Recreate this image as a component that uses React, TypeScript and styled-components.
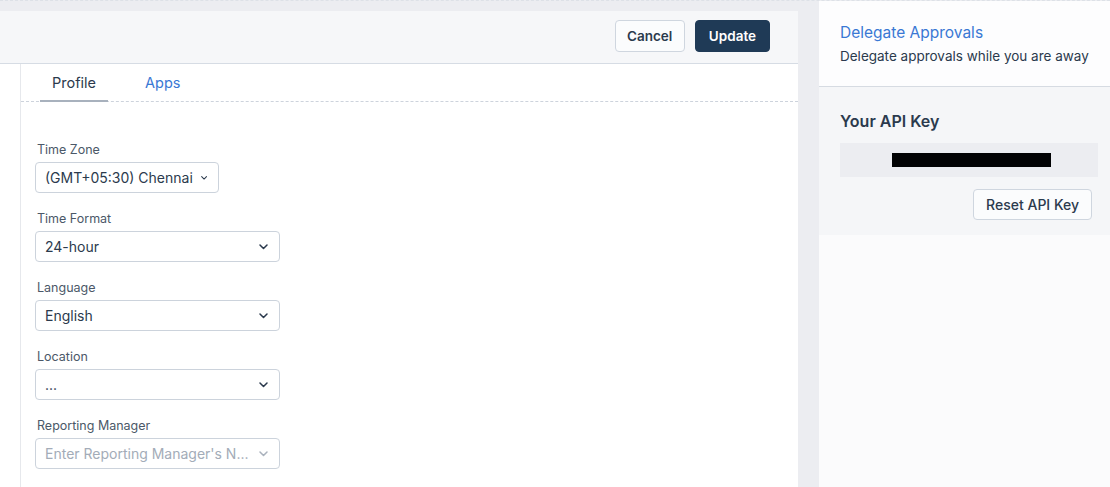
import React, { useState } from 'react'
import styled, { createGlobalStyle } from 'styled-components'

const color = {
  page: '#ecedf1',
  text: '#2b3a4d',
  label: '#4b5868',
  muted: '#8c97a6',
  blue: '#3a78d4',
  navy: '#1f3a56',
  border: '#ccd3dc',
}

const GlobalStyle = createGlobalStyle`
  html, body {
    margin: 0;
    padding: 0;
    background: ${color.page};
    font-family: Inter, "Noto Sans", "Liberation Sans", sans-serif;
    color: ${color.text};
    -webkit-font-smoothing: antialiased;
  }
`

const Page = styled.div`
  display: flex;
  height: 487px;
  overflow: hidden;
  border-top: 1px dashed #dde1e7;
  box-sizing: border-box;
`

const Main = styled.div`
  width: 798px;
  margin-top: 10px;
  background: #fff;
  display: flex;
  flex-direction: column;
`

const Header = styled.div`
  height: 53px;
  box-sizing: border-box;
  background: #f6f7f9;
  border-bottom: 1px solid #d6dce4;
  display: flex;
  justify-content: flex-end;
  align-items: center;
  gap: 10px;
  padding: 0 28px 2px 0;
`

const Button = styled.button<{ primary?: boolean }>`
  height: 32px;
  padding: 0 ${p => (p.primary ? 13 : 11.5)}px;
  border-radius: 4px;
  font-family: inherit;
  font-size: 13.5px;
  font-weight: 600;
  cursor: pointer;
  border: 1px solid ${p => (p.primary ? color.navy : '#cfd6df')};
  background: ${p => (p.primary ? color.navy : '#fbfcfd')};
  color: ${p => (p.primary ? '#fff' : color.text)};
`

const Body = styled.div`
  flex: 1;
  display: flex;
`

const Rail = styled.div`
  width: 20px;
  border-right: 1px solid #e6e8ec;
`

const Content = styled.div`
  flex: 1;
`

const Tabs = styled.div`
  display: flex;
  height: 37px;
  border-bottom: 1px dashed #cdd3dc;
  padding-left: 19px;
  gap: 25px;
`

const Tab = styled.div<{ active?: boolean }>`
  padding: 0 12px;
  min-width: 68px;
  display: flex;
  justify-content: ${p => (p.active ? 'center' : 'flex-start')};
  align-items: center;
  font-size: 14.5px;
  cursor: pointer;
  color: ${p => (p.active ? color.text : color.blue)};
  border-bottom: 2px solid ${p => (p.active ? '#a8b1bd' : 'transparent')};
  margin-bottom: -1px;
  box-sizing: border-box;
`

const Form = styled.div`
  padding: 39px 0 0 14px;
  display: flex;
  flex-direction: column;
  gap: 17px;
`

const Field = styled.div`
  display: flex;
  flex-direction: column;
  gap: 3px;
`

const Label = styled.label`
  font-size: 12.5px;
  color: ${color.label};
  padding-left: 2px;
  line-height: 18px;
`

const Select = styled.div<{ width?: number; placeholder?: boolean }>`
  width: ${p => p.width ?? 245}px;
  height: 31px;
  box-sizing: border-box;
  border: 1px solid ${color.border};
  border-radius: 4px;
  display: flex;
  align-items: center;
  justify-content: space-between;
  gap: 8px;
  padding: 0 11px 0 9px;
  font-size: 14px;
  color: ${p => (p.placeholder ? '#a3acb8' : color.text)};
  background: #fff;
  white-space: nowrap;
  overflow: hidden;
`

const Chevron = ({ faded }: { faded?: boolean }) => (
  <svg width="9" height="6" viewBox="0 0 9 6" fill="none">
    <path d="M1 1l3.5 3.5L8 1" stroke={faded ? '#aab2bd' : '#2b3a4d'} strokeWidth="1.5" strokeLinecap="round" strokeLinejoin="round" />
  </svg>
)

const Gutter = styled.div`
  width: 21px;
  background: ${color.page};
`

const Aside = styled.div`
  flex: 1;
  display: flex;
  flex-direction: column;
  background: #fbfbfc;
`

const Delegate = styled.div`
  height: 86px;
  box-sizing: border-box;
  background: #fdfdfe;
  border-bottom: 1px solid #d6dbe2;
  padding: 21px 0 0 21px;
`

const LinkTitle = styled.a`
  display: block;
  font-size: 15.5px;
  color: ${color.blue};
  text-decoration: none;
  line-height: 22px;
`

const Sub = styled.div`
  font-size: 13.5px;
  line-height: 22px;
  margin-top: 1px;
`

const ApiSection = styled.div`
  height: 148px;
  box-sizing: border-box;
  background: #f5f6f8;
  padding: 24px 12px 0 21px;
  display: flex;
  flex-direction: column;
`

const ApiTitle = styled.div`
  font-size: 16px;
  font-weight: 600;
  line-height: 20px;
`

const KeyBox = styled.div`
  margin-top: 12px;
  height: 34px;
  background: #ecedf1;
  display: flex;
  justify-content: center;
  align-items: center;
  padding-left: 4px;
`

const Masked = styled.div`
  width: 159px;
  height: 14px;
  background: #020304;
`

const ResetButton = styled(Button)`
  align-self: flex-end;
  margin: 12px 6px 0 0;
  font-weight: 500;
  font-size: 14px;
  height: 31px;
  padding: 0 12px;
`

export default function App() {
  const [tab, setTab] = useState('profile')
  const fields = [
    { label: 'Time Zone', value: '(GMT+05:30) Chennai', width: 184 },
    { label: 'Time Format', value: '24-hour' },
    { label: 'Language', value: 'English' },
    { label: 'Location', value: '...' },
    { label: 'Reporting Manager', value: "Enter Reporting Manager's N...", placeholder: true },
  ]
  return (
    <>
      <GlobalStyle />
      <Page>
        <Main>
          <Header>
            <Button>Cancel</Button>
            <Button primary>Update</Button>
          </Header>
          <Body>
            <Rail />
            <Content>
              <Tabs>
                <Tab active={tab === 'profile'} onClick={() => setTab('profile')}>Profile</Tab>
                <Tab active={tab === 'apps'} onClick={() => setTab('apps')}>Apps</Tab>
              </Tabs>
              <Form>
                {fields.map(f => (
                  <Field key={f.label}>
                    <Label>{f.label}</Label>
                    <Select width={f.width} placeholder={f.placeholder}>
                      <span>{f.value}</span>
                      <Chevron faded={f.placeholder} />
                    </Select>
                  </Field>
                ))}
              </Form>
            </Content>
          </Body>
        </Main>
        <Gutter />
        <Aside>
          <Delegate>
            <LinkTitle href="#">Delegate Approvals</LinkTitle>
            <Sub>Delegate approvals while you are away</Sub>
          </Delegate>
          <ApiSection>
            <ApiTitle>Your API Key</ApiTitle>
            <KeyBox>
              <Masked />
            </KeyBox>
            <ResetButton>Reset API Key</ResetButton>
          </ApiSection>
        </Aside>
      </Page>
    </>
  )
}
